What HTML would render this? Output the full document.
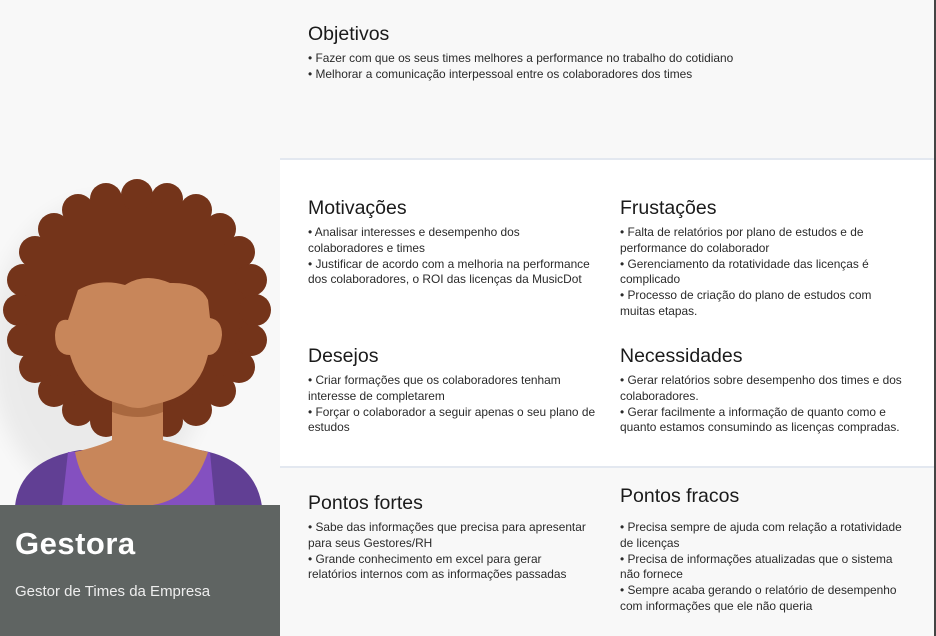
<!DOCTYPE html>
<html><head><meta charset="utf-8"><style>
*{margin:0;padding:0;box-sizing:border-box}
body{width:936px;height:636px;background:#f8f8f8;font-family:"Liberation Sans","DejaVu Sans",sans-serif;color:#1e1e1e;position:relative;overflow:hidden}
.mid{position:absolute;left:280px;top:158px;width:654px;height:310px;background:#fff;border-top:2px solid #e3e8f0;border-bottom:2px solid #e3e8f0}
.bot{position:absolute;left:280px;top:468px;width:654px;height:168px;background:#f8f8f8}
.edge{position:absolute;right:0;top:0;width:2px;height:636px;background:#444}
.b{position:absolute;width:320px;white-space:nowrap}
.b h2{font-weight:normal;font-size:19.5px;line-height:22px;margin-bottom:6px;color:#1a1a1a}
.b p{font-size:11.9px;line-height:15.8px;color:#2a2a2a}
.card{position:absolute;left:0;top:505px;width:280px;height:131px;background:#5f6462;color:#fff}
.card h1{position:absolute;left:15px;top:21px;font-size:31px;font-weight:bold;letter-spacing:0.5px}
.card div{position:absolute;left:15px;top:78px;font-size:15px;color:#eee}
</style></head><body>
<div class="mid"></div><div class="bot"></div><div class="edge"></div>
<svg style="position:absolute;left:0;top:150px" width="280" height="356" viewBox="0 0 280 356">
<defs><filter id="sh" x="-30%" y="-30%" width="160%" height="160%"><feGaussianBlur stdDeviation="10"/></filter></defs>
<ellipse cx="100" cy="200" rx="110" ry="150" fill="#000" opacity="0.05" filter="url(#sh)"/>
<g fill="#74341a">
<ellipse cx="137" cy="160" rx="120" ry="117"/>
<circle cx="255" cy="160" r="16"/><circle cx="239" cy="217" r="16"/><circle cx="196" cy="260" r="16"/><circle cx="137" cy="275" r="16"/>
<circle cx="78" cy="260" r="16"/><circle cx="35" cy="217" r="16"/><circle cx="19" cy="160" r="16"/><circle cx="35" cy="102" r="16"/>
<circle cx="78" cy="60" r="16"/><circle cx="137" cy="45" r="16"/><circle cx="196" cy="60" r="16"/><circle cx="239" cy="102" r="16"/>
<circle cx="251" cy="190" r="16"/><circle cx="220" cy="241" r="16"/><circle cx="167" cy="271" r="16"/><circle cx="106" cy="271" r="16"/>
<circle cx="54" cy="241" r="16"/><circle cx="23" cy="190" r="16"/><circle cx="23" cy="130" r="16"/><circle cx="54" cy="79" r="16"/>
<circle cx="106" cy="49" r="16"/><circle cx="167" cy="49" r="16"/><circle cx="220" cy="79" r="16"/><circle cx="251" cy="130" r="16"/>
</g>
<path d="M15 356 Q20 310 80 300 L200 300 Q255 310 262 356Z" fill="#613f94"/>
<path d="M68 302 L210 302 L215 356 L62 356Z" fill="#8450c0"/>
<path d="M112 240 L163 240 L163 290 Q200 300 208 302 Q190 356 140 356 Q85 356 75 302 Q100 296 112 290Z" fill="#c8865a"/>
<path d="M112 248 Q138 268 163 248 L163 262 Q138 272 112 262Z" fill="#a9683f"/>
<path d="M78 140 Q100 128 125 135 Q145 122 170 133 Q200 132 208 150 L210 168 Q222 170 222 185 Q220 205 208 205 Q200 240 170 250 Q138 262 108 250 Q80 240 70 205 Q55 205 55 185 Q56 168 68 170 Z" fill="#c8865a"/>
</svg>
<div class="card"><h1>Gestora</h1><div>Gestor de Times da Empresa</div></div>

<div class="b" style="left:308px;top:23px;width:600px"><h2>Objetivos</h2><p>• Fazer com que os seus times melhores a performance no trabalho do cotidiano<br>• Melhorar a comunicação interpessoal entre os colaboradores dos times</p></div>

<div class="b" style="left:308px;top:197px"><h2>Motivações</h2><p>• Analisar interesses e desempenho dos<br>colaboradores e times<br>• Justificar de acordo com a melhoria na performance<br>dos colaboradores, o ROI das licenças da MusicDot</p></div>

<div class="b" style="left:620px;top:197px"><h2>Frustações</h2><p>• Falta de relatórios por plano de estudos e de<br>performance do colaborador<br>• Gerenciamento da rotatividade das licenças é<br>complicado<br>• Processo de criação do plano de estudos com<br>muitas etapas.</p></div>

<div class="b" style="left:308px;top:345px"><h2>Desejos</h2><p>• Criar formações que os colaboradores tenham<br>interesse de completarem<br>• Forçar o colaborador a seguir apenas o seu plano de<br>estudos</p></div>

<div class="b" style="left:620px;top:345px"><h2>Necessidades</h2><p>• Gerar relatórios sobre desempenho dos times e dos<br>colaboradores.<br>• Gerar facilmente a informação de quanto como e<br>quanto estamos consumindo as licenças compradas.</p></div>

<div class="b" style="left:308px;top:492px"><h2>Pontos fortes</h2><p>• Sabe das informações que precisa para apresentar<br>para seus Gestores/RH<br>• Grande conhecimento em excel para gerar<br>relatórios internos com as informações passadas</p></div>

<div class="b" style="left:620px;top:485px"><h2 style="margin-bottom:13px">Pontos fracos</h2><p>• Precisa sempre de ajuda com relação a rotatividade<br>de licenças<br>• Precisa de informações atualizadas que o sistema<br>não fornece<br>• Sempre acaba gerando o relatório de desempenho<br>com informações que ele não queria</p></div>
</body></html>
